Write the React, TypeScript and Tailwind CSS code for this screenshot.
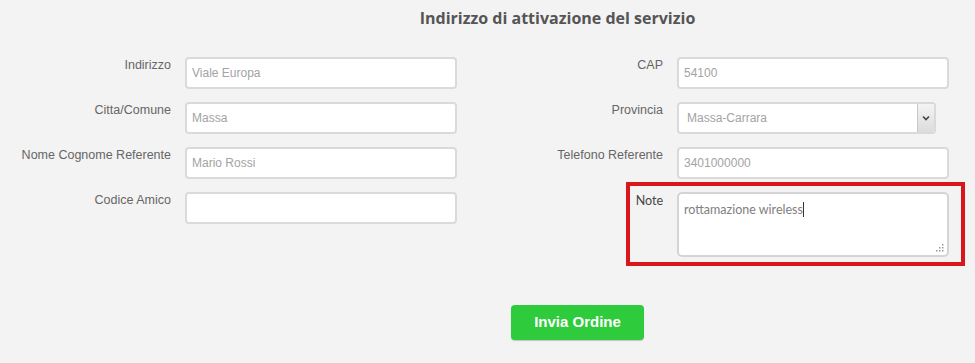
import React from "react";

const labelCls =
  "w-[171px] shrink-0 text-right pt-[1px] text-[12.5px] leading-[14px] text-[#666] [font-family:'Liberation_Sans',Arial,sans-serif]";
const inputCls =
  "ml-[14px] w-[272px] h-[32px] rounded-[4px] border-2 border-[#dadada] bg-white px-[5px] flex items-center text-[12px] text-[#a3a3a3] [font-family:'Liberation_Sans',Arial,sans-serif]";

function Field({ label, value }: { label: string; value?: string }) {
  return (
    <div className="flex items-start">
      <div className={labelCls}>{label}</div>
      <div className={inputCls}>{value}</div>
    </div>
  );
}

export default function App() {
  return (
    <div className="w-[975px] h-[363px] bg-[#f3f3f3] overflow-hidden">
      <div className="pt-[7px] pl-[140px] text-center text-[16px] leading-[22px] font-bold text-[#555] [font-family:'Open_Sans',sans-serif]">
        Indirizzo di attivazione del servizio
      </div>
      <div className="mt-[28px] grid grid-cols-[492px_483px]">
        <div className="flex flex-col gap-[13px]">
          <Field label="Indirizzo" value="Viale Europa" />
          <Field label="Citta/Comune" value="Massa" />
          <Field label="Nome Cognome Referente" value="Mario Rossi" />
          <Field label="Codice Amico" />
        </div>
        <div className="flex flex-col gap-[13px]">
          <Field label="CAP" value="54100" />
          <div className="flex items-start">
            <div className={labelCls}>Provincia</div>
            <div className="ml-[14px] w-[259px] h-[32px] rounded-[4px] border-2 border-[#dadada] bg-white flex items-stretch text-[12px] text-[#a3a3a3] [font-family:'Liberation_Sans',Arial,sans-serif]">
              <div className="flex-1 flex items-center px-[8px]">Massa-Carrara</div>
              <div className="w-[17px] border-l border-[#c8c8c8] bg-gradient-to-b from-[#f4f4f4] to-[#dcdcdc] flex items-center justify-center rounded-r-[2px]">
                <svg width="8" height="6" viewBox="0 0 8 6">
                  <path d="M1 1.5 L4 4.5 L7 1.5" fill="none" stroke="#444" strokeWidth="1.6" />
                </svg>
              </div>
            </div>
          </div>
          <Field label="Telefono Referente" value="3401000000" />
          <div className="relative flex items-start">
            <div className="w-[171px] shrink-0 text-right pt-[1px] text-[12.5px] leading-[16px] text-[#444] [font-family:'Lato',sans-serif]">
              Note
            </div>
            <div className="relative ml-[14px] w-[272px] h-[65px] rounded-[5px] border-2 border-[#d4d4d4] bg-white px-[5px] pt-[7px] text-[12.5px] leading-[18px] text-[#808080] [font-family:'Lato',sans-serif]">
              <span>rottamazione wireless</span>
              <span className="inline-block w-px h-[15px] bg-[#333] align-middle -mt-[2px]"></span>
              <svg className="absolute right-[3px] bottom-[3px]" width="8" height="8" viewBox="0 0 8 8">
                <rect x="6" y="0" width="1.5" height="1.5" fill="#999" />
                <rect x="3" y="3" width="1.5" height="1.5" fill="#999" />
                <rect x="6" y="3" width="1.5" height="1.5" fill="#999" />
                <rect x="0" y="6" width="1.5" height="1.5" fill="#999" />
                <rect x="3" y="6" width="1.5" height="1.5" fill="#999" />
                <rect x="6" y="6" width="1.5" height="1.5" fill="#999" />
              </svg>
            </div>
            <div className="pointer-events-none absolute left-[134px] top-[-10px] w-[339px] h-[84px] border-4 border-[#d9161b]"></div>
          </div>
        </div>
      </div>
      <div className="mt-[48px] pl-[511px]">
        <div className="w-[133px] h-[35px] rounded-[4px] bg-[#2ecc3c] shadow-[0_1px_1px_rgba(0,0,0,0.2)] flex items-center justify-center text-white text-[15px] font-bold [font-family:'Liberation_Sans',Arial,sans-serif]">
          Invia Ordine
        </div>
      </div>
    </div>
  );
}
